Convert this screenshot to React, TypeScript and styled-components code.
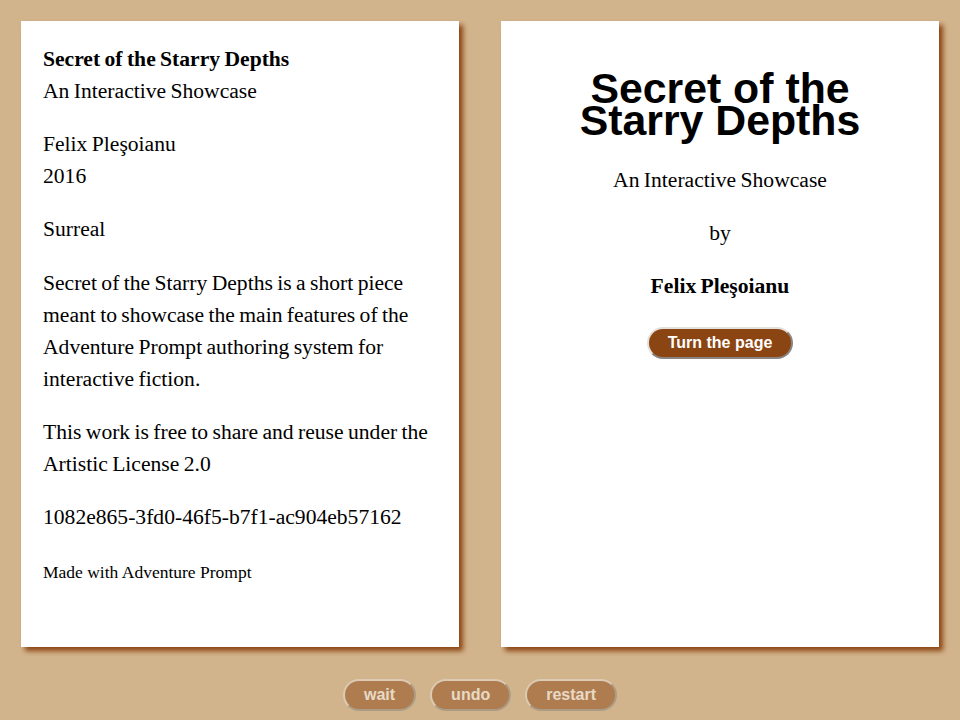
import React from "react";
import styled, { createGlobalStyle } from "styled-components";

const GlobalStyle = createGlobalStyle`
  html, body {
    margin: 0;
    padding: 0;
    background: #d2b48c;
  }
  body {
    font-family: "Liberation Serif", "Times New Roman", serif;
    font-size: 21.6px;
    word-spacing: -1px;
    color: #000;
  }
`;

const Book = styled.div`
  display: flex;
  flex-direction: column;
  width: 960px;
  height: 720px;
`;

const Spread = styled.div`
  display: grid;
  grid-template-columns: 438px 438px;
  gap: 42px;
  padding: 21px 21px 0;
`;

const Page = styled.section<{ $centered?: boolean }>`
  box-sizing: border-box;
  height: 626px;
  background: #fff;
  padding: 22px 22px;
  box-shadow: 4px 4px 5px #8b4513;
  line-height: 32px;
  text-align: ${(p) => (p.$centered ? "center" : "left")};
  overflow: hidden;
`;

const Para = styled.p<{ $first?: boolean }>`
  margin: ${(p) => (p.$first ? "0" : "21.2px")} 0 0;
`;

const Small = styled.p`
  margin: 26px 0 0;
  font-size: 17.5px;
  line-height: 26px;
  word-spacing: 0;
`;

const Title = styled.h1`
  font-family: "Liberation Sans", Arial, sans-serif;
  font-size: 42.8px;
  font-weight: bold;
  line-height: 32px;
  word-spacing: 0;
  margin: 29px 0 28px;
`;

const Button = styled.button<{ $muted?: boolean }>`
  font-family: "Liberation Sans", Arial, sans-serif;
  font-size: 16px;
  font-weight: bold;
  line-height: 18px;
  word-spacing: 0;
  color: #fff;
  background: #8b4513;
  border: 2px solid;
  border-color: #e4e0dc #8a8580 #8a8580 #e4e0dc;
  border-radius: 16px;
  padding: 5px 19px;
  height: 32px;
  cursor: pointer;
  opacity: ${(p) => (p.$muted ? 0.5 : 1)};
`;

const ButtonRow = styled.div`
  margin-top: 25px;
  line-height: 0;
`;

const Toolbar = styled.nav`
  display: flex;
  justify-content: center;
  gap: 14px;
  margin-top: 32px;
`;

export default function App() {
  return (
    <Book>
      <GlobalStyle />
      <Spread>
        <Page>
          <Para $first>
            <b>Secret of the Starry Depths</b>
            <br />
            An Interactive Showcase
          </Para>
          <Para>
            Felix Pleşoianu
            <br />
            2016
          </Para>
          <Para>Surreal</Para>
          <Para>
            Secret of the Starry Depths is a short piece meant to showcase the
            main features of the Adventure Prompt authoring system for
            interactive fiction.
          </Para>
          <Para>
            This work is free to share and reuse under the Artistic License 2.0
          </Para>
          <Para>1082e865-3fd0-46f5-b7f1-ac904eb57162</Para>
          <Small>Made with Adventure Prompt</Small>
        </Page>
        <Page $centered>
          <Title>
            Secret of the
            <br />
            Starry Depths
          </Title>
          <Para $first>An Interactive Showcase</Para>
          <Para>by</Para>
          <Para>
            <b>Felix Pleşoianu</b>
          </Para>
          <ButtonRow>
            <Button>Turn the page</Button>
          </ButtonRow>
        </Page>
      </Spread>
      <Toolbar>
        <Button $muted>wait</Button>
        <Button $muted>undo</Button>
        <Button $muted>restart</Button>
      </Toolbar>
    </Book>
  );
}
